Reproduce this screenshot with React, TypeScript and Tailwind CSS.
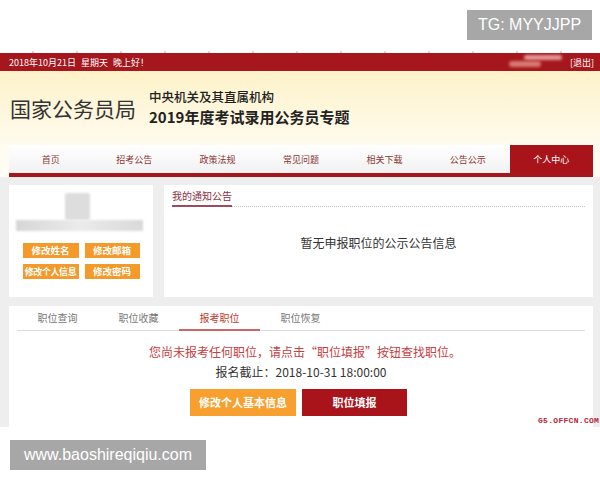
export default function App() {
  const nav = ["首页", "招考公告", "政策法规", "常见问题", "相关下载", "公告公示", "个人中心"];
  const tabs = ["职位查询", "职位收藏", "报考职位", "职位恢复"];
  return (
    <div className="relative w-[600px] h-[480px] bg-white overflow-hidden font-['Noto_Sans_CJK_SC',sans-serif]">
      {/* top white strip with badge */}
      <div className="h-[53px] flex flex-col">
        <div className="flex justify-end pt-[10px] pr-[8px]">
          <div className="w-[125px] h-[30px] bg-[#a7a7a7] text-white text-[16px] leading-none font-['Liberation_Sans',sans-serif] flex items-center justify-center">
            TG: MYYJJPP
          </div>
        </div>
        <div className="mt-auto h-[2px] bg-[repeating-linear-gradient(90deg,transparent_0px,transparent_32px,#f3c9c9_32px,#f3c9c9_34px,transparent_34px,transparent_44px)]" />
      </div>

      {/* red bar */}
      <div className="h-[18px] bg-[#a5161d] flex items-center justify-between pl-[9px] pr-[6px] text-white text-[9px] leading-none">
        <div className="flex gap-[5px]">
          <span>2018年10月21日</span>
          <span>星期天</span>
          <span>晚上好！</span>
        </div>
        <div className="flex items-center">
          <div className="relative w-[55px] h-[14px] mr-[6px]">
            <div className="absolute left-[15px] top-[0px] w-[38px] h-[5px] rounded-full bg-[#e79a9a] blur-[1.5px]" />
            <div className="absolute left-[0px] top-[6px] w-[32px] h-[6px] rounded-full bg-[#d77a72] blur-[1.5px]" />
          </div>
          <span>[退出]</span>
        </div>
      </div>

      {/* header */}
      <div className="h-[74px] bg-linear-to-b from-[#fdf2c9] to-[#fffbee] flex items-center pl-[10px]">
        <div className="text-[21px] leading-none text-[#333]">国家公务员局</div>
        <div className="ml-[13px] flex flex-col gap-[6px] -mt-[3px]">
          <div className="text-[12.5px] leading-[13px] font-medium text-[#222]">中央机关及其直属机构</div>
          <div className="text-[15px] leading-[15px] font-bold text-[#222]">2019年度考试录用公务员专题</div>
        </div>
      </div>

      {/* nav */}
      <div className="bg-[#fffcf2] pl-[9px] pr-[7px]">
        <div className="h-[32px] flex bg-linear-to-b from-white to-[#f1f1f1] border-b-[4px] border-[#a5161d]">
          {nav.map((n, i) => (
            <div
              key={n}
              className={
                i === nav.length - 1
                  ? "flex-1 flex items-center justify-center text-[9px] leading-none bg-[#a8141a] text-white"
                  : "flex-1 flex items-center justify-center text-[9px] leading-none text-[#8b3535]"
              }
            >
              {n}
            </div>
          ))}
        </div>
      </div>

      {/* gray content */}
      <div className="relative h-[250px] bg-[#eeeeee] pt-[8px] pl-[9px] pr-[7px] flex flex-col gap-[9px]">
        <div className="flex gap-[11px] h-[112px]">
          {/* left card */}
          <div className="w-[144px] bg-white flex flex-col items-center pt-[8px]">
            <div className="w-[25px] h-[27px] bg-[#dddddd] -ml-[8px] rounded-[2px] blur-[1px]" />
            <div className="self-start ml-[7px] w-[127px] h-[11px] bg-linear-to-r from-[#d6d6d6] via-[#ebebeb] to-[#d9d9d9] blur-[1px]" />
            <div className="mt-[12px] grid grid-cols-[56px_55px] gap-x-[6px] gap-y-[6px]">
              {["修改姓名", "修改邮箱", "修改个人信息", "修改密码"].map((b) => (
                <div
                  key={b}
                  className={
                    b.length > 4
                      ? "h-[15px] bg-[#f39a2b] text-white text-[9px] tracking-[-0.4px] font-bold leading-none flex items-center justify-center whitespace-nowrap"
                      : "h-[15px] bg-[#f39a2b] text-white text-[9.5px] font-bold leading-none flex items-center justify-center whitespace-nowrap"
                  }
                >
                  {b}
                </div>
              ))}
            </div>
          </div>

          {/* right card */}
          <div className="flex-1 bg-white px-[8px] pt-[4px] flex flex-col">
            <div className="flex border-b border-dotted border-[#c8c8c8]">
              <span className="text-[10px] leading-[14px] pb-[2px] text-[#8b2f3f] border-b-2 border-[#9b4b5b] -mb-px">
                我的通知公告
              </span>
            </div>
            <div className="mt-[28px] text-center text-[12px] leading-[16px] text-[#333]">
              暂无申报职位的公示公告信息
            </div>
          </div>
        </div>

        {/* bottom card */}
        <div className="flex-1 bg-white px-[8px] flex flex-col">
          <div className="h-[25px] flex border-b border-[#dddddd]">
            {tabs.map((t, i) => (
              <div
                key={t}
                className={
                  i === 2
                    ? "w-[81px] flex items-center justify-center text-[10px] leading-none text-[#c0392b] border-b-2 border-[#c66] -mb-px"
                    : "w-[81px] flex items-center justify-center text-[10px] leading-none text-[#777]"
                }
              >
                {t}
              </div>
            ))}
          </div>
          <div className="mt-[13px] pl-[8px] text-center text-[12px] leading-[16px] text-[#c4403f]">
            您尚未报考任何职位，请点击“职位填报”按钮查找职位。
          </div>
          <div className="mt-[4px] text-center text-[12px] leading-[16px] text-[#333]">
            报名截止：2018-10-31 18:00:00
          </div>
          <div className="mt-[9px] flex justify-center gap-[6px] pr-[5px]">
            <div className="w-[106px] h-[27px] bg-[#f8a02f] text-white text-[11px] font-bold leading-none flex items-center justify-center">
              修改个人基本信息
            </div>
            <div className="w-[105px] h-[27px] bg-[#a8141a] text-white text-[11px] font-bold leading-none flex items-center justify-center">
              职位填报
            </div>
          </div>
        </div>
      </div>

      {/* watermark */}
      <div className="absolute left-[538px] top-[417px] text-[8px] leading-none font-bold tracking-[0.3px] text-[#b8283a] font-['Liberation_Mono',monospace]">
        G5.OFFCN.COM
      </div>

      {/* bottom badge */}
      <div className="mt-[13px] ml-[10px] w-[196px] h-[30px] bg-[#a7a7a7] text-white text-[16px] leading-none font-['Liberation_Sans',sans-serif] flex items-center justify-center">
        www.baoshireqiqiu.com
      </div>
    </div>
  );
}
